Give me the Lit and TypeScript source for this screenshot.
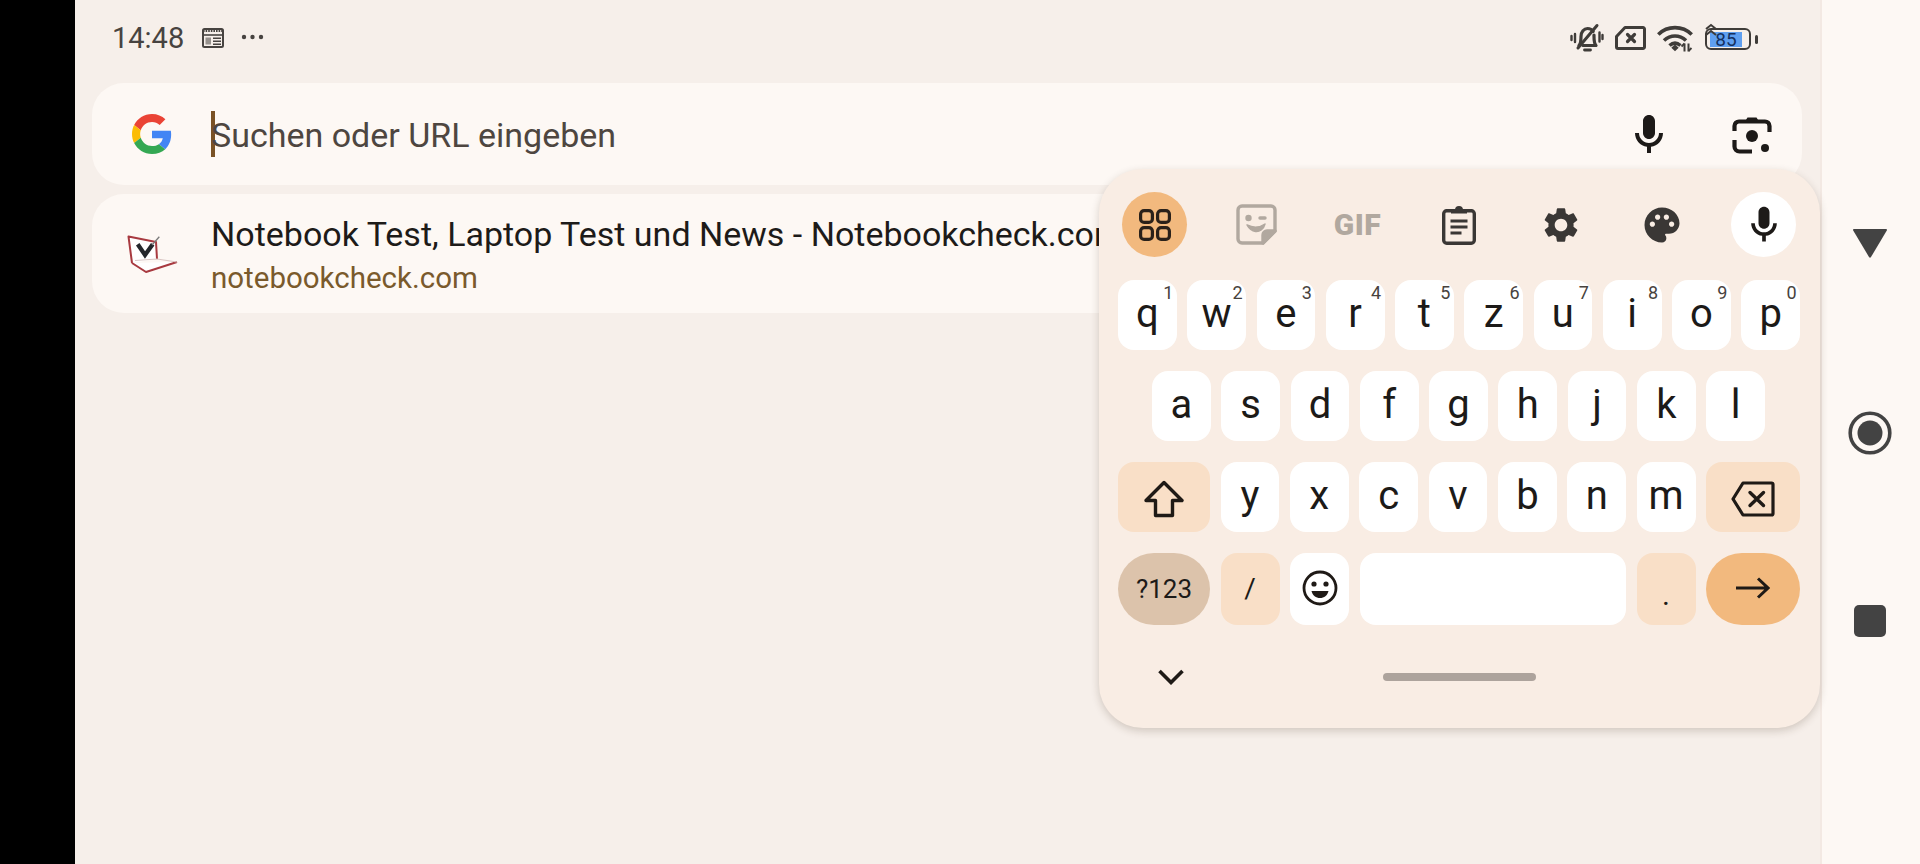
import { LitElement, html, css } from "lit";
import { customElement } from "lit/decorators.js";

const MIC = "M12 14c1.66 0 3-1.34 3-3V5c0-1.66-1.34-3-3-3S9 3.34 9 5v6c0 1.66 1.34 3 3 3zm5-3c0 2.76-2.24 5-5 5s-5-2.24-5-5H5c0 3.53 2.61 6.43 6 6.92V21h2v-3.08c3.39-.49 6-3.39 6-6.92h-2z";
const GEAR = "M19.14 12.94c.04-.3.06-.61.06-.94 0-.32-.02-.64-.07-.94l2.03-1.58c.18-.14.23-.41.12-.61l-1.92-3.32c-.12-.22-.37-.29-.59-.22l-2.39.96c-.5-.38-1.03-.7-1.62-.94l-.36-2.54c-.04-.24-.24-.41-.48-.41h-3.84c-.24 0-.43.17-.47.41l-.36 2.54c-.59.24-1.13.57-1.62.94l-2.39-.96c-.22-.08-.47 0-.59.22L2.74 8.87c-.12.21-.08.47.12.61l2.03 1.58c-.05.3-.09.63-.09.94s.02.64.07.94l-2.03 1.58c-.18.14-.23.41-.12.61l1.92 3.32c.12.22.37.29.59.22l2.39-.96c.5.38 1.03.7 1.62.94l.36 2.54c.05.24.24.41.48.41h3.84c.24 0 .44-.17.47-.41l.36-2.54c.59-.24 1.13-.56 1.62-.94l2.39.96c.22.08.47 0 .59-.22l1.92-3.32c.12-.22.07-.47-.12-.61l-2.01-1.58zM12 15.6c-1.98 0-3.6-1.62-3.6-3.6s1.62-3.6 3.6-3.6 3.6 1.62 3.6 3.6-1.62 3.6-3.6 3.6z";
const PALETTE = "M12 2C6.49 2 2 6.49 2 12s4.49 10 10 10c1.38 0 2.5-1.12 2.5-2.5 0-.61-.23-1.2-.64-1.67-.08-.1-.13-.21-.13-.33 0-.28.22-.5.5-.5H16c3.31 0 6-2.69 6-6 0-4.96-4.49-9-10-9zm5.5 11c-.83 0-1.5-.67-1.5-1.5s.67-1.5 1.5-1.5 1.5.67 1.5 1.5-.67 1.5-1.5 1.5zm-3-4c-.83 0-1.5-.67-1.5-1.5S13.67 6 14.5 6s1.5.67 1.5 1.5S15.33 9 14.5 9zM5 11.5c0-.83.67-1.5 1.5-1.5s1.5.67 1.5 1.5S7.33 13 6.5 13 5 12.33 5 11.5zm6-4c0 .83-.67 1.5-1.5 1.5S8 8.33 8 7.5 8.67 6 9.5 6s1.5.67 1.5 1.5z";

const micIcon = (size: number, color: string) => html`<svg width=${size} height=${size} viewBox="0 0 24 24"><path fill=${color} d=${MIC}/></svg>`;

const googleG = html`<svg width="40" height="40" viewBox="0 0 48 48">
  <path fill="#EA4335" d="M24 9.5c3.54 0 6.71 1.22 9.21 3.6l6.85-6.85C35.9 2.38 30.47 0 24 0 14.62 0 6.51 5.38 2.56 13.22l7.98 6.19C12.43 13.72 17.74 9.5 24 9.5z"/>
  <path fill="#4285F4" d="M46.98 24.55c0-1.57-.15-3.09-.38-4.55H24v9.02h12.94c-.58 2.96-2.26 5.48-4.78 7.18l7.73 6c4.51-4.18 7.09-10.36 7.09-17.65z"/>
  <path fill="#FBBC05" d="M10.53 28.59c-.48-1.45-.76-2.99-.76-4.59s.27-3.14.76-4.59l-7.98-6.19C.92 16.46 0 20.12 0 24c0 3.88.92 7.54 2.56 10.78l7.97-6.19z"/>
  <path fill="#34A853" d="M24 48c6.48 0 11.93-2.13 15.89-5.81l-7.73-6c-2.15 1.45-4.92 2.3-8.16 2.3-6.26 0-11.57-4.22-13.47-9.91l-7.98 6.19C6.51 42.62 14.62 48 24 48z"/>
</svg>`;

const laptop = html`<svg width="52" height="40" viewBox="0 0 52 40">
  <path d="M6 29 L2.500 2.500 L30 8 L31 25" fill="#fff" stroke="#a83a40" stroke-width="2" stroke-linejoin="round"/>
  <path d="M6 29 L20 38 L51 28" fill="#fff" stroke="#a83a40" stroke-width="2" stroke-linejoin="round"/>
  <path d="M9 26.500 L31 25 L51 28" fill="none" stroke="#d9c6c4" stroke-width="1.200"/>
  <path d="M11.700 10.300 L19 21 L26.700 10.300" fill="none" stroke="#23262b" stroke-width="4.200"/>
  <path d="M26 11 L33.300 2.700" fill="none" stroke="#7a7a7a" stroke-width="1.300"/>
</svg>`;

const calendar = html`<svg width="24" height="24" viewBox="0 0 24 24" fill="none" stroke="#474340" stroke-width="2">
  <rect x="2" y="3" width="20" height="18" rx="1.5"/>
  <path d="M2 4.5h20" stroke-width="3" stroke-dasharray="1.6 1"/>
  <path d="M2 9h20" stroke-width="1.6"/>
  <rect x="4.5" y="11.5" width="5.5" height="7" fill="#474340" stroke="none" opacity=".55"/>
  <path d="M12 12.3h8M12 15.3h8M12 18.3h8" stroke-width="1.4"/>
</svg>`;

const dots = html`<svg width="26" height="6" viewBox="0 0 26 6" fill="#474340"><circle cx="4" cy="3" r="2.2"/><circle cx="12.5" cy="3" r="2.2"/><circle cx="21" cy="3" r="2.2"/></svg>`;

const bell = html`<svg width="34" height="30" viewBox="0 0 34 30" fill="none" stroke="#3f3c39" stroke-width="3.200" stroke-linecap="round" stroke-linejoin="round">
  <path d="M9 22.500c2-2 2-4.500 2-9 0-4.500 3-8 6.500-8 2.500 0 4.500 1 5.700 3"/>
  <path d="M24 12c0 5-.2 8 2 10.500H13"/>
  <path d="M14.500 27h6" stroke-width="2.800"/>
  <path d="M8 25 L27 2.500" stroke-width="3"/>
  <path d="M5 11v8M1.500 13v4M29.500 9.500v9M32.500 12v4" stroke-width="2.400"/>
</svg>`;

const sim = html`<svg width="31" height="24" viewBox="0 0 31 24" fill="none" stroke="#3f3c39" stroke-width="3" stroke-linejoin="round" stroke-linecap="round">
  <path d="M10 1.500h18a1.500 1.500 0 0 1 1.500 1.500v18a1.500 1.500 0 0 1-1.500 1.500H3a1.500 1.500 0 0 1-1.500-1.500V10.500z"/>
  <path d="M12.500 8.500l7 7M19.500 8.500l-7 7" stroke-width="3.200"/>
</svg>`;

const wifi = html`<svg width="36" height="27" viewBox="0 0 36 27" fill="none" stroke="#3f3c39" stroke-width="3.600">
  <path d="M1.300 9.500C10.500 .3 25.500 .3 34.700 9.500"/>
  <path d="M7 15.500c6.500-6 15.500-6 22 0"/>
  <path d="M12.500 20.500c3.500-3 7.500-3 11 0"/>
  <path d="M14.300 22.800l3.700-3.300 3.700 3.300-3.700 3.400z" fill="#3f3c39" stroke="none"/>
  <path d="M27.500 18.500v8M31.500 18.500v8" stroke-width="2"/>
  <path d="M24.500 21.500l3-3M34.500 23l-3 3" stroke-width="1.800"/>
</svg>`;

const sticker = html`<svg width="41" height="41" viewBox="0 0 41 41" fill="none" stroke="#b1a89f" stroke-width="3.400" stroke-linejoin="round" stroke-linecap="round">
  <path d="M6 2h29a4 4 0 0 1 4 4v21L27 39H6a4 4 0 0 1-4-4V6a4 4 0 0 1 4-4z"/>
  <path d="M39 27h-8a4 4 0 0 0-4 4v8z" fill="#b1a89f"/>
  <circle cx="12.500" cy="14" r="1.500" fill="#b1a89f"/>
  <path d="M24 14h5" />
  <path d="M11 21c6 3 13 2.500 18-1-1.500 5.500-5.500 8-9.500 7.500-3.500-.4-6.500-3-8.500-6.500z" fill="#b1a89f" stroke-width="1.500"/>
</svg>`;

const clipboard = html`<svg width="34" height="40" viewBox="0 0 34 40" fill="none" stroke="#3a3735" stroke-width="3.400">
  <rect x="1.700" y="5.700" width="30.600" height="32.600" rx="3"/>
  <path d="M10 7.500V5h4a3 3 0 0 1 6 0h4v2.500z" fill="#3a3735" stroke-width="2"/>
  <path d="M8.500 16h17M8.500 22h17M8.500 28h11" stroke-width="2.800"/>
</svg>`;

const grid4 = html`<svg width="32" height="32" viewBox="0 0 32 32" fill="none" stroke="#2a211a" stroke-width="3.200">
  <rect x="1.600" y="1.600" width="11.800" height="11.800" rx="3.500"/><rect x="18.600" y="1.600" width="11.800" height="11.800" rx="3.500"/>
  <rect x="1.600" y="18.600" width="11.800" height="11.800" rx="3.500"/><rect x="18.600" y="18.600" width="11.800" height="11.800" rx="3.500"/>
</svg>`;

const shift = html`<svg width="40" height="38" viewBox="0 0 40 38" fill="none" stroke="#1f1a16" stroke-width="3.400" stroke-linejoin="round">
  <path d="M20 2.500L38 20.500H28.500V35.500H11.500V20.500H2z"/>
</svg>`;

const backspace = html`<svg width="44" height="36" viewBox="0 0 44 36" fill="none" stroke="#1f1a16" stroke-width="3.200" stroke-linejoin="round" stroke-linecap="round">
  <path d="M12 2h28.500a1.500 1.500 0 0 1 1.500 1.500v29a1.500 1.500 0 0 1-1.500 1.500H12L2 18z"/>
  <path d="M19 11.500l13.500 13M32.500 11.500L19 24.500" stroke-width="3.400"/>
</svg>`;

const emoji = html`<svg width="36" height="36" viewBox="0 0 36 36" fill="none" stroke="#1f1a16" stroke-width="2.800">
  <circle cx="18" cy="18" r="16"/>
  <circle cx="12" cy="14" r="2.600" fill="#1f1a16" stroke="none"/><circle cx="24" cy="14" r="2.600" fill="#1f1a16" stroke="none"/>
  <path d="M9.500 21h17c-1 4.500-4.500 7-8.500 7s-7.500-2.500-8.500-7z" fill="#1f1a16" stroke="none"/>
</svg>`;

const arrow = html`<svg width="34" height="22" viewBox="0 0 34 22" fill="none" stroke="#1f1a16" stroke-width="3"><path d="M0 11h31M22 1.500L32 11l-10 9.500"/></svg>`;

const lens = html`<svg width="40" height="40" viewBox="0 0 40 40" fill="none" stroke="#1d1a18" stroke-width="4.200">
  <path d="M2.500 16V11a4.500 4.500 0 0 1 4.500-4.500h26a4.500 4.500 0 0 1 4.500 4.500v6" />
  <path d="M13 6.500l2.500-4h9l2.500 4z" fill="#1d1a18" stroke="none"/>
  <path d="M2.500 25v6.500a5 5 0 0 0 5 5H20"/>
  <circle cx="20" cy="21" r="6" fill="#1d1a18" stroke="none"/>
  <circle cx="33" cy="33" r="4" fill="#1d1a18" stroke="none"/>
</svg>`;

const chevron = html`<svg width="26" height="16" viewBox="0 0 26 16" fill="none" stroke="#1f1a16" stroke-width="3.600"><path d="M1.500 2L13 13.500 24.500 2"/></svg>`;

const triangle = html`<svg width="36" height="30" viewBox="0 0 36 30"><path d="M2 1h32q1.500 0 .8 1.500L19 29q-1 1.500-2 0L1.200 2.500Q.5 1 2 1z" fill="#434343"/></svg>`;
const record = html`<svg width="44" height="44" viewBox="0 0 44 44"><circle cx="22" cy="22" r="19.800" fill="none" stroke="#434343" stroke-width="3.600"/><circle cx="22" cy="22" r="12.500" fill="#434343"/></svg>`;

const ROW1 = [["q","1"],["w","2"],["e","3"],["r","4"],["t","5"],["z","6"],["u","7"],["i","8"],["o","9"],["p","0"]];
const ROW2 = ["a","s","d","f","g","h","j","k","l"];
const ROW3 = ["y","x","c","v","b","n","m"];

@customElement("app-root")
export class AppRoot extends LitElement {
  static styles = css`
    :host { display: block; width: 1920px; height: 864px; overflow: hidden; font-family: Roboto, "Liberation Sans", sans-serif; }
    .screen { position: relative; display: flex; width: 1920px; height: 864px; background: #000; }
    .black { width: 75px; flex: none; background: #000; }
    .main { width: 1745px; flex: none; background: #f6efea; display: flex; flex-direction: column; overflow: hidden; }
    .nav { flex: 1; background: #fdf8f4; border-left: 2px solid #f3e9e3; display: flex; flex-direction: column; align-items: center; padding-top: 228px; box-sizing: border-box; }
    .nav svg { display: block; flex: none; }
    .nav .rec { margin-top: 153px; margin-left: -2px; }
    .nav .sq { width: 32px; height: 32px; border-radius: 5px; background: #434343; margin-top: 150px; margin-left: -2px; }
    .nav > svg { margin-left: -2px; }
    .status { height: 83px; flex: none; display: flex; align-items: flex-start; padding: 23px 62px 0 37px; box-sizing: border-box; color: #474340; }
    .time { font-size: 29px; line-height: 31px; width: 89px; }
    .status .cal { display: flex; margin-top: 3px; }
    .status .dots { display: flex; margin: 11px 0 0 15px; }
    .right { margin-left: auto; display: flex; align-items: center; gap: 11px; height: 30px; }
    .right svg { display: block; }
    .battery { position: relative; width: 54px; height: 26px; }
    .battery .shell { position: absolute; left: 1px; top: 3px; width: 46px; height: 22px; border: 2.6px solid #3f3c39; border-radius: 6px; box-sizing: border-box; }
    .battery .nub { position: absolute; right: 0; top: 10px; width: 3px; height: 9px; border-radius: 2px; background: #3f3c39; }
    .battery .fill { position: absolute; left: 6px; top: 7px; width: 32px; height: 15px; background: #5f9ff0; display: flex; align-items: center; justify-content: center; font-size: 19px; color: #14305f; line-height: 15px; }
    .battery .up { position: absolute; left: 0; top: -2px; }
    .bar, .card { margin-left: 17px; width: 1710px; background: #fdf8f4; display: flex; align-items: center; flex: none; }
    .bar { height: 102px; border-radius: 32px; }
    .card { height: 119px; border-radius: 32px; margin-top: 9px; }
    .lead { width: 119px; flex: none; display: flex; justify-content: center; }
    .lead svg { display: block; }
    .cursor { width: 4px; height: 46px; background: #7a5225; flex: none; margin-right: -4px; }
    .placeholder { font-size: 34px; line-height: 40px; color: #4e4640; white-space: nowrap; padding-top: 2px; }
    .bar .actions { margin-left: auto; display: flex; align-items: center; gap: 43px; padding: 2px 20px 0 0; }
    .bar .actions span { width: 60px; display: flex; justify-content: center; }
    .lines { display: flex; flex-direction: column; white-space: nowrap; padding-top: 3px; }
    .title { font-size: 34px; line-height: 40px; color: #1d1b19; }
    .domain { font-size: 29.5px; line-height: 36px; color: #7a5a2c; margin-top: 6px; }
    .kb { position: absolute; left: 1099px; top: 169px; width: 721px; height: 559px; box-sizing: border-box; border-radius: 44px; background: #f9ede4; box-shadow: 0 3px 8px rgba(60,40,20,.2); display: flex; flex-direction: column; padding: 23px 20px 0 19px; }
    .tools { display: flex; justify-content: space-between; margin: 0 4px 23px 4px; height: 65px; }
    .tool { width: 65px; height: 65px; border-radius: 50%; display: flex; align-items: center; justify-content: center; flex: none; }
    .tool svg { display: block; }
    .tool.on { background: #f2b97e; }
    .tool.white { background: #fff; }
    .gif { font-size: 30px; font-weight: 900; color: #b1a89f; letter-spacing: .5px; }
    .rows { display: flex; flex-direction: column; gap: 21px; }
    .row { display: flex; gap: 10.5px; height: 70px; }
    .row.inset { padding: 0 35px 0 34px; }
    .row.last { height: 72px; }
    .key { position: relative; flex: 1 1 0; min-width: 0; background: #fff; border-radius: 16px; display: flex; align-items: center; justify-content: center; font-size: 40px; line-height: 1; color: #1c1a18; padding-bottom: 2px; box-sizing: border-box; }
    .key sup { position: absolute; right: 3.5px; top: 4px; font-size: 18px; line-height: 18px; color: #47423d; }
    .key.mod { background: #f9dfc7; }
    .key.wide { flex: 0 0 92px; }
    .key.wider { flex: 0 0 94px; }
    .key.fixed { flex: 0 0 59px; }
    .key.space { flex: 1 1 0; }
    .key.pill { border-radius: 36px; }
    .key.sym { background: #dcc3ab; font-size: 26px; padding: 0; }
    .key.go { background: #f2b97e; }
    .key.small { font-size: 28px; padding: 0; }
    .key.dot { font-size: 30px; padding: 12px 0 0 0; }
    .key.bk { padding: 3px 0 0 0; }
    .bottom { flex: 1; display: grid; grid-template-columns: 1fr 153px 1fr; align-items: center; margin-left: -19px; margin-right: -20px; }
    .chev { padding-left: 59px; display: flex; }
    .chev svg { display: block; }
    .handle { height: 8px; border-radius: 4px; background: #ada39c; }
  `;

  private key(k: string, sup?: string) {
    return html`<div class="key">${k}${sup ? html`<sup>${sup}</sup>` : ""}</div>`;
  }

  render() {
    return html`<div class="screen">
      <div class="black"></div>
      <div class="main">
        <div class="status">
          <span class="time">14:48</span>
          <span class="cal">${calendar}</span>
          <span class="dots">${dots}</span>
          <div class="right">
            ${bell}${sim}${wifi}
            <div class="battery">
              <div class="shell"></div>
              <div class="fill">85</div>
              <div class="nub"></div>
              <svg class="up" width="14" height="14" viewBox="0 0 14 14" fill="none" stroke="#3f3c39" stroke-width="2"><path d="M2 6l5-4 5 4M2 12l5-4 5 4"/></svg>
            </div>
          </div>
        </div>
        <div class="bar">
          <div class="lead">${googleG}</div>
          <div class="cursor"></div>
          <span class="placeholder">Suchen oder URL eingeben</span>
          <div class="actions"><span>${micIcon(48, "#1d1a18")}</span><span>${lens}</span></div>
        </div>
        <div class="card">
          <div class="lead">${laptop}</div>
          <div class="lines">
            <span class="title">Notebook Test, Laptop Test und News - Notebookcheck.com</span>
            <span class="domain">notebookcheck.com</span>
          </div>
        </div>
      </div>
      <div class="nav">
        ${triangle}
        <div class="rec">${record}</div>
        <div class="sq"></div>
      </div>
      <div class="kb">
        <div class="tools">
          <div class="tool on">${grid4}</div>
          <div class="tool">${sticker}</div>
          <div class="tool"><span class="gif">GIF</span></div>
          <div class="tool">${clipboard}</div>
          <div class="tool"><svg width="42" height="42" viewBox="0 0 24 24"><path fill="#3a3735" d=${GEAR}/></svg></div>
          <div class="tool"><svg width="42" height="42" viewBox="0 0 24 24"><path fill="#3a3735" d=${PALETTE}/></svg></div>
          <div class="tool white">${micIcon(44, "#1d1a18")}</div>
        </div>
        <div class="rows">
          <div class="row">${ROW1.map(([k, s]) => this.key(k, s))}</div>
          <div class="row inset">${ROW2.map((k) => this.key(k))}</div>
          <div class="row">
            <div class="key mod wide bk">${shift}</div>
            ${ROW3.map((k) => this.key(k))}
            <div class="key mod wider bk">${backspace}</div>
          </div>
          <div class="row last">
            <div class="key sym wide pill">?123</div>
            <div class="key mod fixed small">/</div>
            <div class="key fixed">${emoji}</div>
            <div class="key space"></div>
            <div class="key mod fixed dot">.</div>
            <div class="key go wider pill">${arrow}</div>
          </div>
        </div>
        <div class="bottom">
          <div class="chev">${chevron}</div>
          <div class="handle"></div>
          <div></div>
        </div>
      </div>
    </div>`;
  }
}
